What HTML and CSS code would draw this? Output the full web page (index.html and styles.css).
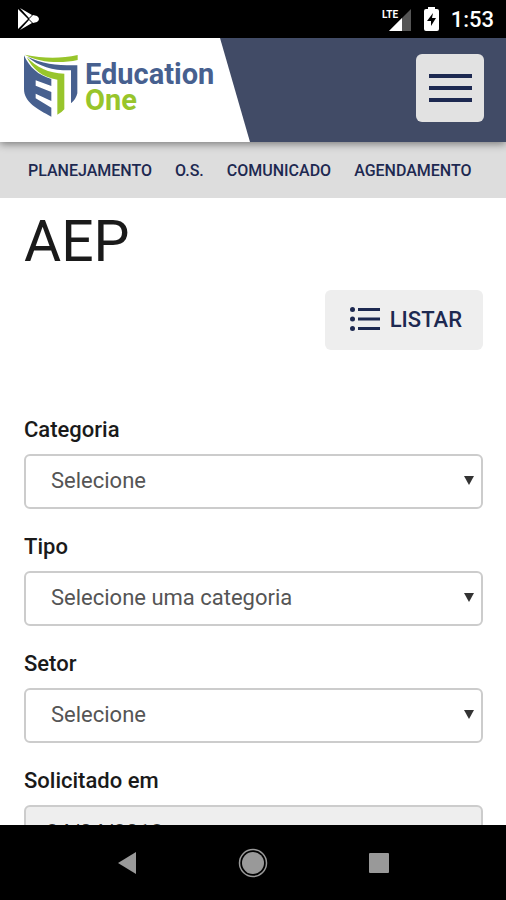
FILE: index.html
```html
<!DOCTYPE html>
<html lang="pt-BR">
<head>
<meta charset="utf-8">
<meta name="viewport" content="width=device-width, initial-scale=1">
<title>Education One</title>
<link rel="stylesheet" href="styles.css">
</head>
<body>
<div class="status">
  <svg class="play" viewBox="0 0 22 22" width="22" height="22" aria-hidden="true">
    <path fill="#fff" d="M0 1v20L10 11zM2 0l9 10 3-3zM2 22l9-10 3 3zM15 7l-4 4 4 4 4-1q4-3 0-6z"/>
  </svg>
  <div class="status-right">
    <svg viewBox="0 0 30 24" width="30" height="24" aria-hidden="true">
      <path fill="#555" d="M29 2v22H7z"/>
      <path fill="#fff" d="M20 11v13H7z"/>
      <path fill="none" stroke="#000" stroke-width="12" d="M0 6h17"/>
      <text class="lte" x="0" y="11">LTE</text>
    </svg>
    <svg class="battery" viewBox="0 0 15 24" width="15" height="24" aria-hidden="true">
      <path fill="#fff" d="M4 0h7v2h2q2 0 2 2v18q0 2-2 2H2q-2 0-2-2V4q0-2 2-2h2z"/>
      <path fill="#000" d="M9 6l-6 8h4v5l5-8H8z"/>
    </svg>
    <span>1:53</span>
  </div>
</div>
<div class="app">
  <header class="header">
    <a class="brand" href="#">
      <svg viewBox="0 0 162 192" width="54" height="64" aria-hidden="true">
        <path fill="#98c52b" d="M2 2C60 14 110 14 161 3v15C110 29 45 26 2 2z"/>
        <path fill="#47608f" d="M10 8c45 22 95 27 150 26v84q-4 18-19 30V49C90 50 45 38 10 8z"/>
        <path fill="#98c52b" d="M8 9c30 32 65 48 113 50v107q-8 10-21 16V77C55 70 25 45 8 9z"/>
        <path fill="#47608f" d="M0 4c15 35 43 60 82 71v21L35 79v16l47 19v27l-47-22v14l47 28v27C40 165 0 145 0 105z"/>
      </svg>
      <span class="brand-name"><span>Education</span><span class="brand-one">One</span></span>
    </a>
    <button class="menu" type="button" aria-label="Menu"><span></span><span></span><span></span></button>
  </header>
  <nav class="nav">
    <a href="#">PLANEJAMENTO</a><a href="#">O.S.</a><a href="#">COMUNICADO</a><a href="#">AGENDAMENTO</a>
  </nav>
  <main class="content">
    <h1>AEP</h1>
    <div class="actions">
      <button class="list" type="button">
        <svg viewBox="0 0 30 24" width="30" height="24" aria-hidden="true">
          <path fill="none" stroke="#1d2951" stroke-width="3" d="M8 2.500h22M8 12h22M8 21.500h22"/>
          <g fill="#1d2951"><circle cx="2.500" cy="2.500" r="2.500"/><circle cx="2.500" cy="12" r="2.500"/><circle cx="2.500" cy="21.500" r="2.500"/></g>
        </svg>
        LISTAR
      </button>
    </div>
    <form class="form">
      <div class="field">
        <label for="categoria">Categoria</label>
        <div class="select">
          <select id="categoria"><option>Selecione</option></select>
          <svg viewBox="0 0 10 9" width="10" height="9" aria-hidden="true"><path fill="#333" d="M0 0h10L5 9z"/></svg>
        </div>
      </div>
      <div class="field">
        <label for="tipo">Tipo</label>
        <div class="select">
          <select id="tipo"><option>Selecione uma categoria</option></select>
          <svg viewBox="0 0 10 9" width="10" height="9" aria-hidden="true"><path fill="#333" d="M0 0h10L5 9z"/></svg>
        </div>
      </div>
      <div class="field">
        <label for="setor">Setor</label>
        <div class="select">
          <select id="setor"><option>Selecione</option></select>
          <svg viewBox="0 0 10 9" width="10" height="9" aria-hidden="true"><path fill="#333" d="M0 0h10L5 9z"/></svg>
        </div>
      </div>
      <div class="field">
        <label for="data">Solicitado em</label>
        <input id="data" type="text" value="24/04/2018" readonly>
      </div>
    </form>
  </main>
</div>
<div class="system">
  <button type="button" aria-label="Voltar"><svg viewBox="0 0 30 30" width="30" height="30"><path fill="#999" d="M6 15L24 4v22z"/></svg></button>
  <button type="button" aria-label="Início"><svg viewBox="0 0 30 30" width="30" height="30"><circle cx="15" cy="15" r="13.500" fill="none" stroke="#999" stroke-width="1.500"/><circle cx="15" cy="15" r="11" fill="#999"/></svg></button>
  <button type="button" aria-label="Recentes"><svg viewBox="0 0 30 30" width="30" height="30"><rect x="5" y="5" width="20" height="20" rx="1" fill="#999"/></svg></button>
</div>
</body>
</html>
```

FILE: styles.css
```css
* {
  box-sizing: border-box;
}

body {
  margin: 0;
  height: 100vh;
  display: flex;
  flex-direction: column;
  font-family: Roboto, sans-serif;
  color: #1a1a1a;
  background: #fff;
}

button {
  border: 0;
  padding: 0;
  font: inherit;
  cursor: pointer;
}

svg {
  display: block;
}

.status {
  flex: none;
  display: flex;
  justify-content: space-between;
  align-items: center;
  height: 38px;
  padding: 0 12px 0 18px;
  background: #000;
  color: #fff;
}

.status-right {
  display: flex;
  align-items: center;
  gap: 12px;
  font-size: 22px;
  font-weight: 500;
}

.lte {
  fill: #fff;
  font-size: 10px;
  font-weight: 700;
}

.app {
  flex: 1;
  min-height: 0;
  overflow: hidden;
}

.header {
  position: relative;
  display: flex;
  justify-content: space-between;
  align-items: stretch;
  height: 104px;
  background: #414b66;
  box-shadow: 0 2px 8px rgba(0, 0, 0, 0.45);
}

.brand {
  display: flex;
  align-items: flex-start;
  gap: 7px;
  width: 250px;
  padding: 16px 0 0 24px;
  background: #fff;
  clip-path: polygon(0 0, 220px 0, 100% 100%, 0 100%);
  text-decoration: none;
}

.brand-name {
  display: flex;
  flex-direction: column;
  padding-top: 7px;
  font-size: 29px;
  line-height: 26px;
  font-weight: 700;
  color: #47608f;
}

.brand-one {
  color: #98c52b;
}

.menu {
  display: flex;
  flex-direction: column;
  justify-content: center;
  align-items: center;
  gap: 8px;
  width: 68px;
  height: 68px;
  margin: 16px 22px 0 0;
  border-radius: 6px;
  background: #e2e2e2;
}

.menu span {
  width: 43px;
  height: 4px;
  background: #1d2951;
}

.nav {
  display: flex;
  align-items: center;
  gap: 23px;
  height: 56px;
  padding: 0 28px;
  background: #ddd;
}

.nav a {
  font-size: 16px;
  font-weight: 500;
  color: #1d2951;
  text-decoration: none;
}

.content {
  padding: 12px 23px 0 24px;
}

h1 {
  margin: 0;
  font-size: 57px;
  line-height: 64px;
  font-weight: 400;
}

.actions {
  display: flex;
  justify-content: flex-end;
  padding-top: 16px;
}

.list {
  display: flex;
  align-items: center;
  gap: 10px;
  height: 60px;
  padding: 0 21px 2px 25px;
  border-radius: 6px;
  background: #eee;
  color: #1d2951;
  font-size: 22px;
  font-weight: 500;
}

.form {
  padding-top: 64px;
}

.field {
  display: flex;
  flex-direction: column;
  gap: 8px;
  margin-bottom: 22px;
}

label {
  font-size: 22px;
  line-height: 32px;
  font-weight: 500;
}

.select {
  position: relative;
}

.select svg {
  position: absolute;
  top: 22px;
  right: 9px;
  pointer-events: none;
}

select,
input {
  appearance: none;
  display: block;
  width: 100%;
  height: 55px;
  margin: 0;
  border: 2px solid #ccc;
  border-radius: 6px;
  font: 400 22px/32px Roboto, sans-serif;
  color: #555;
}

select {
  padding: 0 25px 2px;
  background: #fff;
}

input {
  padding: 0 20px;
  background: #eee;
  color: #333;
}

.system {
  flex: none;
  display: flex;
  justify-content: center;
  align-items: center;
  gap: 96px;
  height: 75px;
  background: #000;
}

.system button {
  background: none;
}
```
